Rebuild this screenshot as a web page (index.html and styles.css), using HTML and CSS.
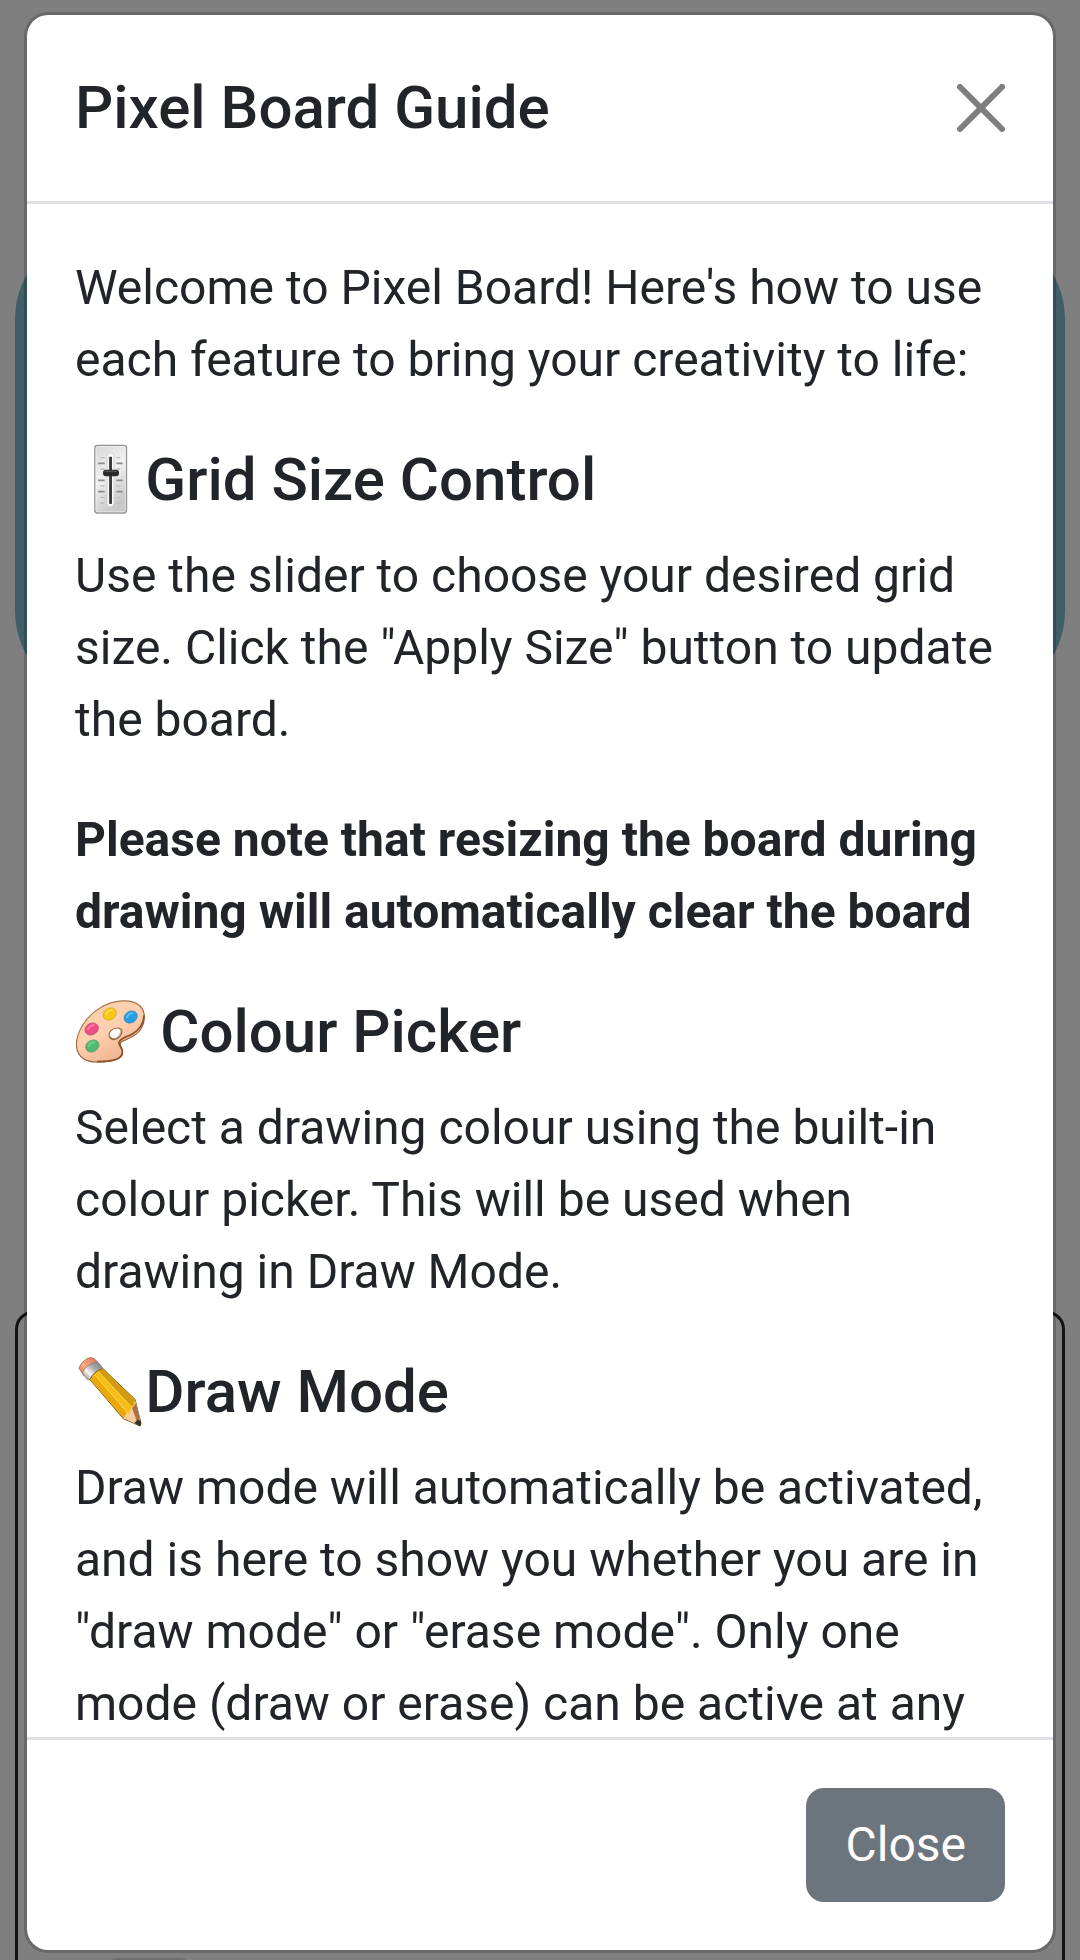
FILE: index.html
```html
<!DOCTYPE html>
<html lang="en">
<head>
<meta charset="utf-8">
<title>Pixel Board</title>
<link rel="stylesheet" href="styles.css">
</head>
<body>
<main class="page">
  <section class="controls"></section>
  <section class="board"><div class="board-button"></div></section>
</main>
<div class="backdrop">
  <div class="modal" role="dialog" aria-labelledby="guide-title">
    <header class="modal-header">
      <h1 class="modal-title" id="guide-title">Pixel Board Guide</h1>
      <button class="close-icon" aria-label="Close">
        <svg viewBox="0 0 16 16"><path d="M.293.293a1 1 0 0 1 1.414 0L8 6.586 14.293.293a1 1 0 1 1 1.414 1.414L9.414 8l6.293 6.293a1 1 0 0 1-1.414 1.414L8 9.414l-6.293 6.293a1 1 0 0 1-1.414-1.414L6.586 8 .293 1.707a1 1 0 0 1 0-1.414z"/></svg>
      </button>
    </header>
    <div class="modal-body">
      <p>Welcome to Pixel Board! Here's how to use each feature to bring your creativity to life:</p>
      <h2>
        <svg class="emoji" viewBox="45 42 211 216" aria-hidden="true">
          <defs>
            <linearGradient id="plate" x1="0" y1="0" x2="0.4" y2="1"><stop offset="0" stop-color="#d6d6d6"/><stop offset=".5" stop-color="#f1f1f1"/><stop offset="1" stop-color="#c9c9c9"/></linearGradient>
          </defs>
          <rect x="104.500" y="46" width="95" height="203" rx="8" fill="url(#plate)" stroke="#929292" stroke-width="4"/>
          <rect x="108" y="49.500" width="88" height="196" rx="5" fill="none" stroke="#f3f3f3" stroke-width="2"/>
          <rect x="141" y="69" width="21" height="161" rx="10" fill="#fafafa" stroke="#c6c6c6" stroke-width="2"/>
          <rect x="147" y="80" width="9" height="142" rx="2" fill="#505050"/>
          <path d="M153 81v140" stroke="#252525" stroke-width="3"/>
          <path d="M121 83h13m35 0h12M121 117h13m35 0h12M121 168h13m35 0h12M121 202h13m35 0h12M121 219h13m35 0h12" stroke="#bdbdbd" stroke-width="4"/>
          <path d="M114 100h20m35 0h19M114 151h20m35 0h19M114 185h20m35 0h19" stroke="#8c8c8c" stroke-width="5"/>
          <rect x="129" y="119" width="48" height="20" rx="9" fill="#292929"/>
          <path d="M136 124h33" stroke="#555" stroke-width="4" stroke-linecap="round"/>
        </svg><span>Grid Size Control</span>
      </h2>
      <p>Use the slider to choose your desired grid size. Click the "Apply Size" button to update the board.</p>
      <p><strong>Please note that resizing the board during drawing will automatically clear the board</strong></p>
      <h2>
        <svg class="emoji" viewBox="45 48 211 216" aria-hidden="true">
          <defs>
            <linearGradient id="wood" x1="0" y1="0" x2=".6" y2="1"><stop offset="0" stop-color="#f3cfa7"/><stop offset=".55" stop-color="#ffd0b0"/><stop offset="1" stop-color="#eeb28c"/></linearGradient>
            <linearGradient id="rim" x1="0" y1="0" x2=".7" y2="1"><stop offset="0" stop-color="#bd895c"/><stop offset="1" stop-color="#854a28"/></linearGradient>
          </defs>
          <path fill-rule="evenodd" fill="url(#wood)" stroke="url(#rim)" stroke-width="3.500" d="M50 201C45 162 77 109 120 84C160 58 216 55 240 78C259 96 256 130 238 153C223 171 204 176 187 184C172 192 188 202 188 217C188 239 151 247 113 246C78 247 53 232 50 201Z M148 169C153 182 169 182 179 170C190 156 188 144 172 144C157 144 144 156 148 169Z"/>
          <path d="M252 106C252 131 236 151 218 161C201 171 175 177 177 190C178 198 187 202 187 217C187 240 146 245 111 245" fill="none" stroke="#8e5029" stroke-width="5"/>
          <path d="M153 172C162 181 173 173 179 164C186 154 183 146 174 145" fill="none" stroke="#b87950" stroke-width="3"/>
          <g stroke-width="2">
            <ellipse cx="149" cy="102" rx="21" ry="17" transform="rotate(-35 149 102)" fill="#f8c616" stroke="#d7a51a"/>
            <ellipse cx="212" cy="111" rx="21" ry="17" transform="rotate(-35 212 111)" fill="#259fe4" stroke="#377fb5"/>
            <ellipse cx="95" cy="147" rx="21" ry="17" transform="rotate(-28 95 147)" fill="#ed4d80" stroke="#b84b6b"/>
            <ellipse cx="97" cy="198" rx="21" ry="17" transform="rotate(-32 97 198)" fill="#50b974" stroke="#579466"/>
          </g>
          <g fill="none" stroke-width="6" stroke-linecap="round" opacity=".65">
            <path d="M138 103q5-12 17-12" stroke="#ffe95f"/><path d="M201 112q5-12 17-12" stroke="#83cdff"/><path d="M84 148q5-12 17-12" stroke="#ff9cba"/><path d="M86 199q5-12 17-12" stroke="#87dc99"/>
          </g>
        </svg><span> Colour Picker</span>
      </h2>
      <p>Select a drawing colour using the built-in colour picker. This will be used when drawing in Draw Mode.</p>
      <h2>
        <svg class="emoji" viewBox="45 48 211 216" aria-hidden="true">
          <defs>
            <linearGradient id="metal" x1="0" y1="1" x2="1" y2="0"><stop offset="0" stop-color="#777"/><stop offset=".35" stop-color="#f5f5f5"/><stop offset=".6" stop-color="#aaa"/><stop offset="1" stop-color="#737373"/></linearGradient>
            <linearGradient id="rubber" x1="0" y1="1" x2="1" y2="0"><stop offset="0" stop-color="#cf6645"/><stop offset=".4" stop-color="#ffad85"/><stop offset="1" stop-color="#cf694b"/></linearGradient>
          </defs>
          <path d="M71 107L57 85Q63 66 83 55Q97 49 106 59L120 74Z" fill="url(#rubber)" stroke="#995440" stroke-width="2"/>
          <path d="M67 99Q77 74 111 65L129 84Q108 94 90 119L82 119Z" fill="url(#metal)" stroke="#777" stroke-width="2"/>
          <path d="M90 119Q100 94 129 86L225 178L243 250L240 258L190 236Z" fill="#f5bd19" stroke="#7c591e" stroke-width="3"/>
          <path d="M91 119L104 105L201 219L191 235Z" fill="#eaa80c"/>
          <path d="M115 95L128 87L225 179L215 202Z" fill="#d39a12"/>
          <path d="M105 105L204 219M115 95L217 204" stroke="#ffdc42" stroke-width="3"/>
          <path d="M191 235L201 218L207 222L215 202L221 202L226 182L243 250L240 258Z" fill="#f4cda0"/>
          <path d="M216 203L221 200L228 189L242 246L231 245Z" fill="#ad7148"/>
          <path d="M223 249L233 239L243 243L243 255L239 259Z" fill="#38312f"/>
        </svg><span>Draw Mode</span>
      </h2>
      <p>Draw mode will automatically be activated, and is here to show you whether you are in "draw mode" or "erase mode". Only one mode (draw or erase) can be active at any</p>
    </div>
    <footer class="modal-footer"><button class="close-button">Close</button></footer>
  </div>
</div>
</body>
</html>
```
FILE: styles.css
```css
* { box-sizing: border-box; }

body {
  margin: 0;
  height: 1960px;
  overflow: hidden;
  background: #fff;
  color: #212529;
  font: 400 48px/1.5 Roboto, sans-serif;
}

.page {
  display: flex;
  flex-direction: column;
  gap: 610px;
  height: 1960px;
  padding: 229px 15px 0;
}

.controls {
  height: 472px;
  flex: none;
  border-radius: 90px;
  background: #80bcd0;
}

.board {
  display: flex;
  flex: 1;
  min-height: 0;
  align-items: flex-end;
  padding: 0 94px;
  border: 3px solid #222826;
  border-bottom: 0;
  border-radius: 18px 18px 0 0;
}

.board-button {
  width: 74px;
  height: 2px;
  border-radius: 8px 8px 0 0 / 2px 2px 0 0;
  background: #dcdcdc;
}

.backdrop {
  position: fixed;
  inset: 0;
  padding: 12px 24px 7px;
  background: rgba(0, 0, 0, .5);
}

.modal {
  display: flex;
  flex-direction: column;
  height: 100%;
  border: 3px solid rgba(0, 0, 0, .175);
  border-radius: 24px;
  background: #fff;
  background-clip: padding-box;
  overflow: hidden;
}

.modal-header {
  display: flex;
  flex: none;
  align-items: center;
  justify-content: space-between;
  padding: 48px;
  border-bottom: 3px solid #dee2e6;
}

h1, h2, p { margin: 0; }

h1, h2 {
  font-size: 60px;
  font-weight: 500;
}

.modal-title { line-height: 1.5; }

.close-icon {
  width: 48px;
  height: 48px;
  padding: 0;
  border: 0;
  background: none;
  opacity: .5;
}

.close-icon svg { display: block; }

.modal-body {
  flex: 1;
  min-height: 0;
  padding: 48px 48px 0;
  overflow: hidden;
}

.modal-body p { margin-bottom: 48px; }

.modal-body p:last-child { margin-bottom: 0; }

h2 {
  display: flex;
  height: 72px;
  margin-bottom: 24px;
  line-height: 1.2;
  white-space: pre;
}

.emoji {
  flex: none;
  width: 70.333px;
  height: 72px;
}

strong { font-weight: 700; }

.modal-footer {
  display: flex;
  flex: none;
  justify-content: flex-end;
  padding: 48px;
  border-top: 3px solid #dee2e6;
}

.close-button {
  padding: 18px 36px;
  border: 3px solid #6c757d;
  border-radius: 18px;
  background: #6c757d;
  color: #fff;
  font: inherit;
}
```
